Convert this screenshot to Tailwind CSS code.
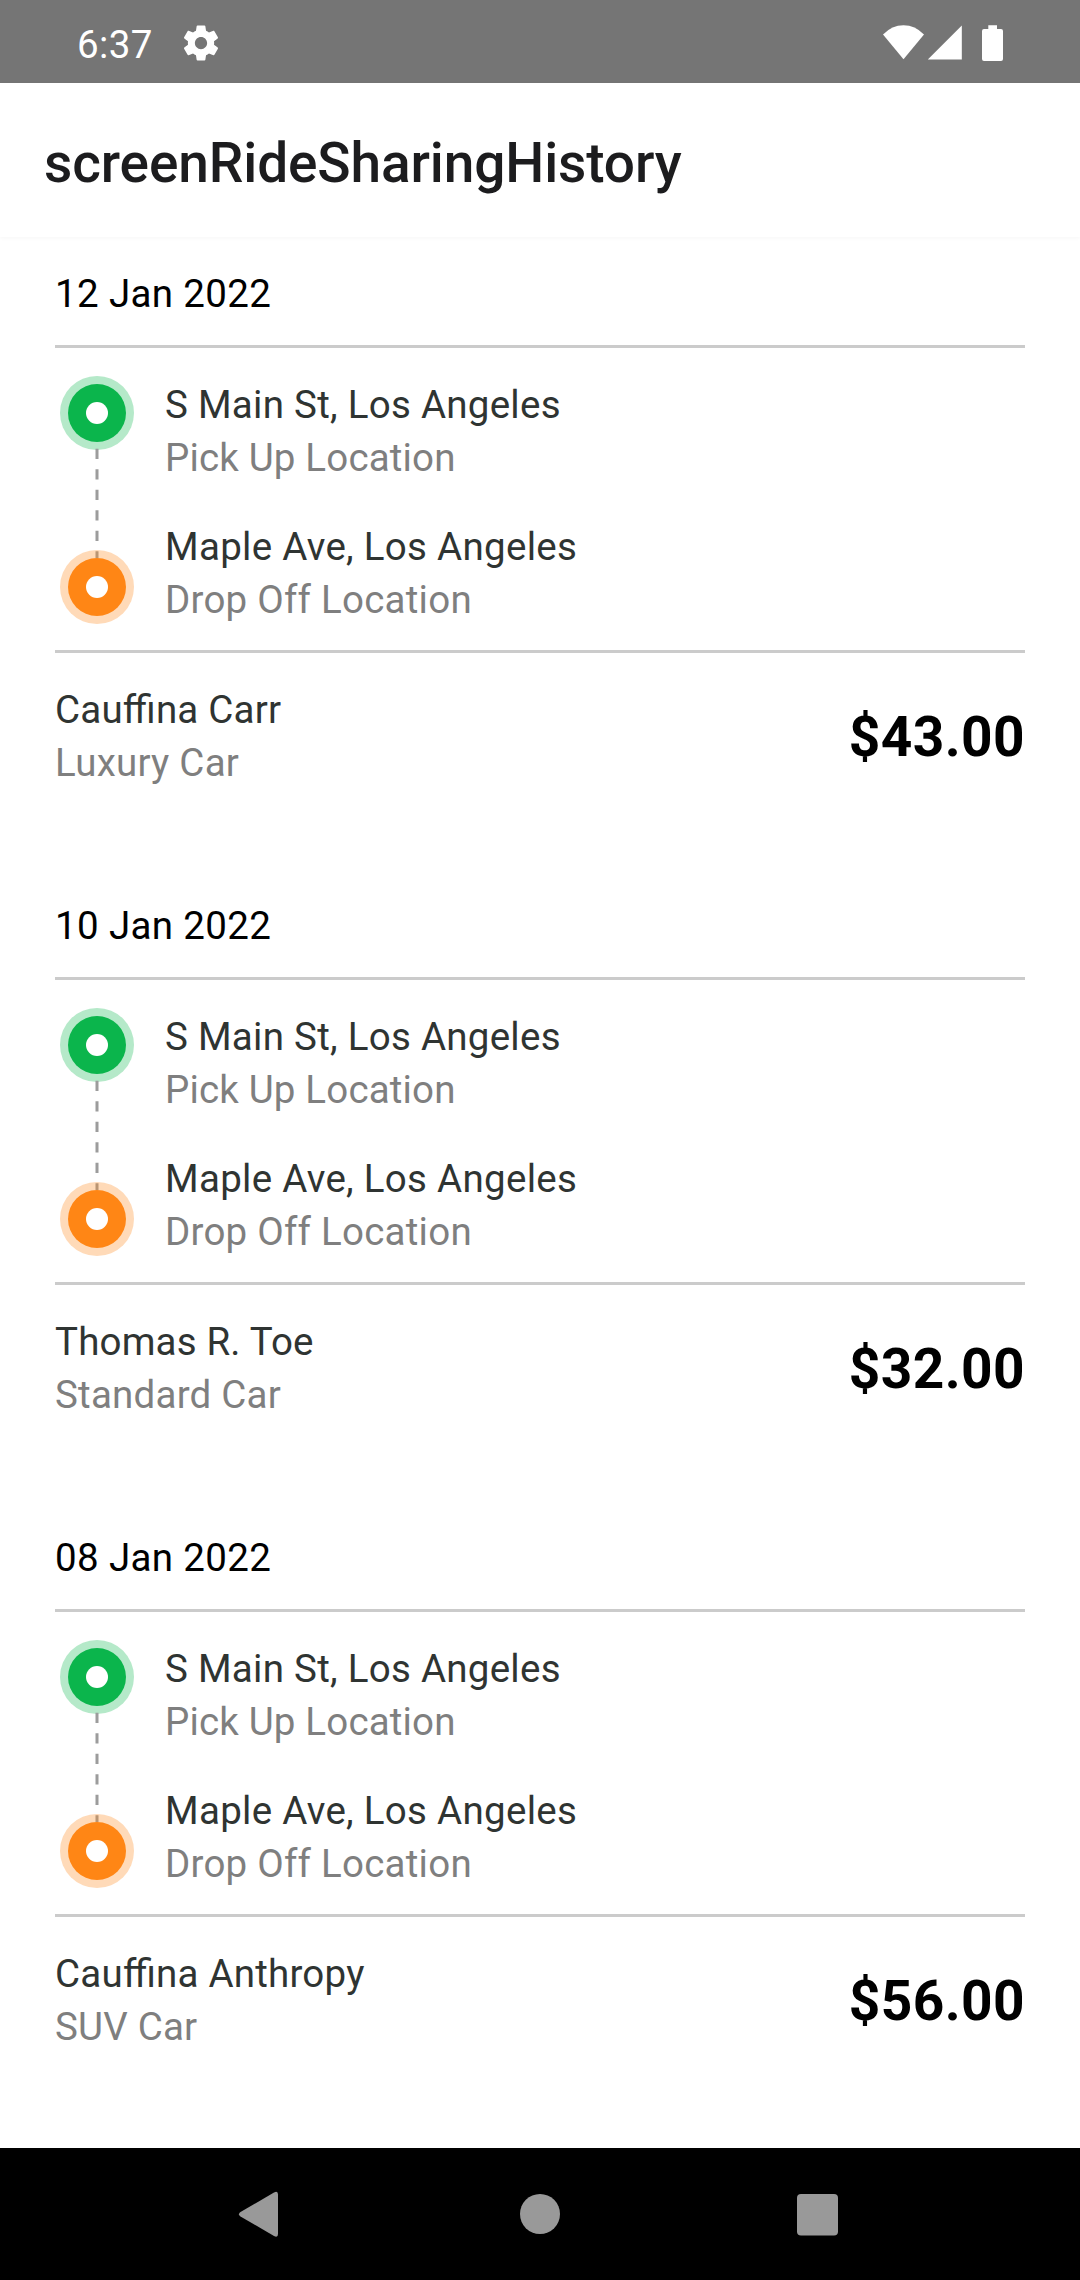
<!DOCTYPE html>
<html lang="en">
<head>
<meta charset="utf-8">
<title>screenRideSharingHistory</title>
<script src="https://cdn.jsdelivr.net/npm/@tailwindcss/browser@4"></script>
</head>
<body class="bg-white">
<svg class="hidden">
  <symbol id="route" viewBox="0 0 74 248">
    <circle cx="37" cy="37" r="37" fill="#0bb54c" fill-opacity=".3"/>
    <circle cx="37" cy="37" r="29" fill="#0bb54c"/>
    <circle cx="37" cy="37" r="11" fill="#fff"/>
    <path d="M37 72.7V182" stroke="#9c9c9c" stroke-width="3" stroke-dasharray="10.3 10.2" fill="none"/>
    <circle cx="37" cy="211" r="37" fill="#ff8615" fill-opacity=".3"/>
    <circle cx="37" cy="211" r="29" fill="#ff8615"/>
    <circle cx="37" cy="211" r="11" fill="#fff"/>
  </symbol>
</svg>
<div class="w-[1080px] h-[2280px] flex flex-col overflow-hidden bg-white font-['Roboto',sans-serif] text-[38.5px] leading-[53px] [font-feature-settings:'liga'_1]">
  <header class="h-[83px] shrink-0 bg-[#757575] flex items-start text-white">
    <span class="w-[104px] ml-[77px] mt-[18px] shrink-0 tracking-[0.35px]">6:37</span>
    <svg class="w-[42px] h-[42px] mt-[22px] -ml-px" viewBox="0 0 24 24" fill="currentColor"><path d="M19.43 12.98c.04-.32.07-.64.07-.98s-.03-.66-.07-.98l2.11-1.65c.19-.15.24-.42.12-.64l-2-3.46c-.12-.22-.39-.3-.61-.22l-2.49 1c-.52-.4-1.08-.73-1.69-.98l-.38-2.65C14.46 2.18 14.25 2 14 2h-4c-.25 0-.46.18-.49.42l-.38 2.65c-.61.25-1.17.59-1.69.98l-2.49-1c-.23-.09-.49 0-.61.22l-2 3.46c-.13.22-.07.49.12.64l2.11 1.65c-.04.32-.07.65-.07.98s.03.66.07.98l-2.11 1.65c-.19.15-.24.42-.12.64l2 3.46c.12.22.39.3.61.22l2.49-1c.52.4 1.08.73 1.69.98l.38 2.65c.03.24.24.42.49.42h4c.25 0 .46-.18.49-.42l.38-2.65c.61-.25 1.17-.59 1.69-.98l2.49 1c.23.09.49 0 .61-.22l2-3.46c.12-.22.07-.49-.12-.64l-2.11-1.65zM12 15.5c-1.93 0-3.5-1.57-3.5-3.5s1.57-3.5 3.5-3.5 3.5 1.57 3.5 3.5-1.57 3.5-3.5 3.5z"/></svg>
    <svg class="w-[140px] h-[83px] ml-auto mr-[60px]" viewBox="880 0 140 83" fill="currentColor">
      <path d="M883 34.5Q892 25.3 903.5 25.3T924 34.5L903.5 59.3Z"/>
      <path d="M927.8 59.6L961.8 25.6V59.6Z"/>
      <path d="M988.3 25.2H997V29H1001Q1003 29 1003 31V59Q1003 61 1001 61H984Q982 61 982 59V31Q982 29 984 29H988.3Z"/>
    </svg>
  </header>
  <div class="h-[154px] shrink-0 px-[44px] flex items-center bg-white shadow-[0_1px_4px_rgba(0,0,0,0.04)]">
    <h1 class="text-[55px] leading-[64px] font-medium text-[#1c1c1e] pt-[6px] tracking-[-0.12px]">screenRideSharingHistory</h1>
  </div>
  <main class="grow px-[55px] pt-[30px] flex flex-col gap-[110px]">
    <section>
      <p class="text-black pb-[25px] border-b-[3px] border-[#cbcbcb] tracking-[0.36px]">12 Jan 2022</p>
      <div class="flex pl-[5px] pt-[28px] pb-[26px] gap-[31px] border-b-[3px] border-[#cbcbcb]">
        <svg class="w-[74px] h-[248px]"><use href="#route"/></svg>
        <div class="flex flex-col gap-[36px] pt-[2px] -mb-[2px]">
          <div><p class="text-[#2f3432] tracking-[0.27px]">S Main St, Los Angeles</p><p class="text-[#7f7f7f] tracking-[0.17px]">Pick Up Location</p></div>
          <div><p class="text-[#2f3432] tracking-[0.29px]">Maple Ave, Los Angeles</p><p class="text-[#7f7f7f] tracking-[0.24px]">Drop Off Location</p></div>
        </div>
      </div>
      <div class="flex justify-between items-center pt-[30px]">
        <div><p class="text-[#2f3432] tracking-[0.2px]">Cauffina Carr</p><p class="text-[#7f7f7f] tracking-[0.25px]">Luxury Car</p></div>
        <p class="text-[55px] leading-[64px] font-bold text-black pt-[2px] tracking-[0.4px]">$43.00</p>
      </div>
    </section>
    <section>
      <p class="text-black pb-[25px] border-b-[3px] border-[#cbcbcb] tracking-[0.36px]">10 Jan 2022</p>
      <div class="flex pl-[5px] pt-[28px] pb-[26px] gap-[31px] border-b-[3px] border-[#cbcbcb]">
        <svg class="w-[74px] h-[248px]"><use href="#route"/></svg>
        <div class="flex flex-col gap-[36px] pt-[2px] -mb-[2px]">
          <div><p class="text-[#2f3432] tracking-[0.27px]">S Main St, Los Angeles</p><p class="text-[#7f7f7f] tracking-[0.17px]">Pick Up Location</p></div>
          <div><p class="text-[#2f3432] tracking-[0.29px]">Maple Ave, Los Angeles</p><p class="text-[#7f7f7f] tracking-[0.24px]">Drop Off Location</p></div>
        </div>
      </div>
      <div class="flex justify-between items-center pt-[30px]">
        <div><p class="text-[#2f3432] tracking-[0.17px]">Thomas R. Toe</p><p class="text-[#7f7f7f] tracking-[0.22px]">Standard Car</p></div>
        <p class="text-[55px] leading-[64px] font-bold text-black pt-[2px] tracking-[0.4px]">$32.00</p>
      </div>
    </section>
    <section>
      <p class="text-black pb-[25px] border-b-[3px] border-[#cbcbcb] tracking-[0.36px]">08 Jan 2022</p>
      <div class="flex pl-[5px] pt-[28px] pb-[26px] gap-[31px] border-b-[3px] border-[#cbcbcb]">
        <svg class="w-[74px] h-[248px]"><use href="#route"/></svg>
        <div class="flex flex-col gap-[36px] pt-[2px] -mb-[2px]">
          <div><p class="text-[#2f3432] tracking-[0.27px]">S Main St, Los Angeles</p><p class="text-[#7f7f7f] tracking-[0.17px]">Pick Up Location</p></div>
          <div><p class="text-[#2f3432] tracking-[0.29px]">Maple Ave, Los Angeles</p><p class="text-[#7f7f7f] tracking-[0.24px]">Drop Off Location</p></div>
        </div>
      </div>
      <div class="flex justify-between items-center pt-[30px]">
        <div><p class="text-[#2f3432] tracking-[0.22px]">Cauffina Anthropy</p><p class="text-[#7f7f7f] tracking-[0.2px]">SUV Car</p></div>
        <p class="text-[55px] leading-[64px] font-bold text-black pt-[2px] tracking-[0.4px]">$56.00</p>
      </div>
    </section>
  </main>
  <nav class="h-[132px] shrink-0 bg-black">
    <svg class="w-full h-full" viewBox="0 0 1080 132" fill="#999">
      <path d="M240.500 68.500L274 88Q278 90 278 86V46.500Q278 42.500 274 44.500L240.500 64Q237.500 66.200 240.500 68.500Z"/>
      <circle cx="540" cy="66" r="20"/>
      <rect x="797" y="46" width="41" height="41.500" rx="4"/>
    </svg>
  </nav>
</div>
</body>
</html>
